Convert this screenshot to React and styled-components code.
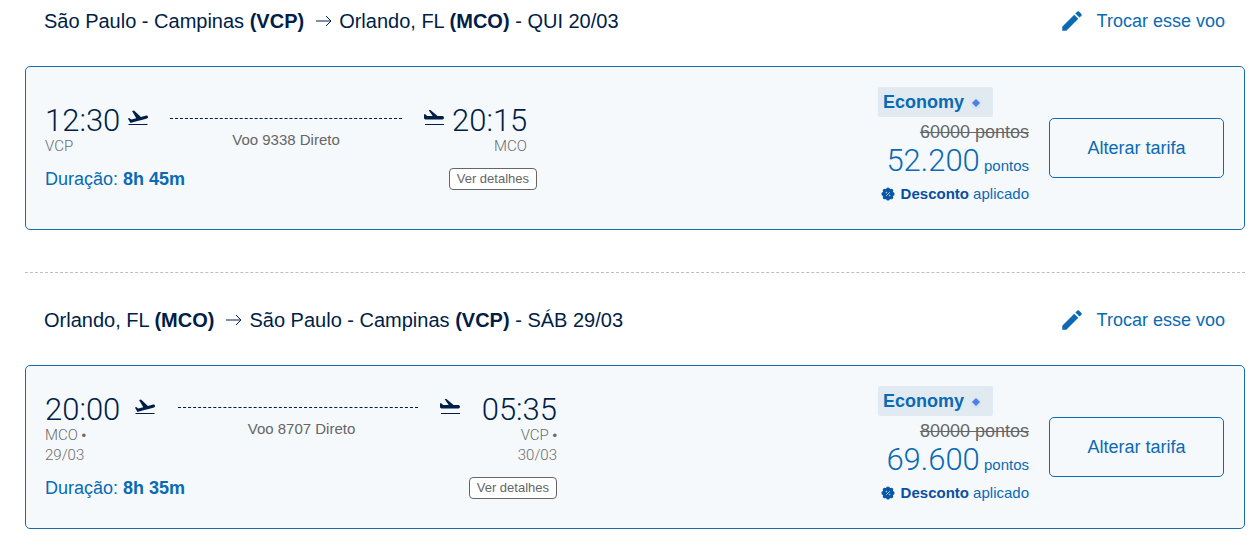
import { Fragment } from 'react'
import { MdEdit } from 'react-icons/md'
import styled, { createGlobalStyle } from 'styled-components'

const flights = [
    {
        from: 'São Paulo - Campinas',
        fromCode: 'VCP',
        to: 'Orlando, FL',
        toCode: 'MCO',
        day: 'QUI 20/03',
        departure: '12:30',
        arrival: '20:15',
        number: 'Voo 9338 Direto',
        duration: '8h 45m',
        oldPrice: '60000 pontos',
        price: '52.200'
    },
    {
        from: 'Orlando, FL',
        fromCode: 'MCO',
        to: 'São Paulo - Campinas',
        toCode: 'VCP',
        day: 'SÁB 29/03',
        departure: '20:00',
        departureDate: '29/03',
        arrival: '05:35',
        arrivalDate: '30/03',
        number: 'Voo 8707 Direto',
        duration: '8h 35m',
        oldPrice: '80000 pontos',
        price: '69.600'
    }
]

export default function App (){
    return(
        <Page>
            <GlobalStyle />
            {flights.map((flight, index) => (
                <Fragment key={flight.number}>
                    {index > 0 && <Divider />}
                    <Flight flight={flight} />
                </Fragment>
            ))}
        </Page>
    )
}

function Flight ({ flight }){
    const overnight = Boolean(flight.arrivalDate)
    return(
        <section>
            <Header>
                <Title>
                    {flight.from} <b>({flight.fromCode})</b>
                    <Arrow />
                    {flight.to} <b>({flight.toCode})</b> - {flight.day}
                </Title>
                <ChangeLink href='#'>
                    <MdEdit size={26} />
                    Trocar esse voo
                </ChangeLink>
            </Header>
            <Card>
                <Itinerary>
                    <Route $overnight={overnight}>
                        <Stop time={flight.departure} code={flight.fromCode} date={flight.departureDate} />
                        <Takeoff />
                        <Track $overnight={overnight}>
                            <Line $overnight={overnight} />
                            <p>{flight.number}</p>
                        </Track>
                        <Landing />
                        <Stop time={flight.arrival} code={flight.toCode} date={flight.arrivalDate} arrival />
                    </Route>
                    <Details>
                        <p>Duração: <b>{flight.duration}</b></p>
                        <DetailsButton type='button'>Ver detalhes</DetailsButton>
                    </Details>
                </Itinerary>
                <Fare>
                    <Cabin>Economy <Diamond /></Cabin>
                    <OldPrice>{flight.oldPrice}</OldPrice>
                    <Price><strong>{flight.price}</strong> pontos</Price>
                    <Discount>
                        <DiscountSeal />
                        <span><b>Desconto</b> aplicado</span>
                    </Discount>
                </Fare>
                <FareButton type='button'>Alterar tarifa</FareButton>
            </Card>
        </section>
    )
}

function Stop ({ time, code, date, arrival }){
    return(
        <StopBox $arrival={arrival} $wide={arrival && date}>
            <Time>{time}</Time>
            <p>{code}{date && <> <Bullet>•</Bullet></>}</p>
            {date && <p>{date}</p>}
        </StopBox>
    )
}

function Arrow (){
    return(
        <ArrowIcon viewBox='0 0 16 12'>
            <path d='M0 6H15M10 1L15 6L10 11' fill='none' stroke='currentColor' />
        </ArrowIcon>
    )
}

function Takeoff (){
    return(
        <PlaneIcon viewBox='2 3 20 17'>
            <path d='M22.07 9.64c-.21-.8-1.04-1.28-1.84-1.06L14.92 10l-6.9-6.43-1.93.51 4.14 7.17-4.97 1.33-1.97-1.54-1.45.39 1.82 3.16.77 1.33 1.6-.43 5.31-1.42 4.35-1.16L21 11.49c.81-.23 1.28-1.05 1.07-1.85z' />
            <path d='M2.5 17h19v1h-19z' />
        </PlaneIcon>
    )
}

function Landing (){
    return(
        <PlaneIcon viewBox='0 0 20 17'>
            <path d='M0 4.2H1.2L3.2 6H8.7L4.6 0H6.4L13.6 6H18.4A1.5 1.6 0 0 1 18.4 9.4H1.5Q0 9.4 0 8Z' />
            <path d='M1 14h19v1H1z' />
        </PlaneIcon>
    )
}

function Diamond (){
    return(
        <DiamondIcon viewBox='0 0 16 16'>
            <circle cx='8' cy='10' r='5' fill='#d3dff5' opacity='.7' />
            <path d='M8 5l4 4-4 4-4-4z' fill='#4b80e6' />
        </DiamondIcon>
    )
}

function DiscountSeal (){
    const angles = [0, 45, 90, 135, 180, 225, 270, 315]
    return(
        <SealIcon viewBox='0 0 14 14'>
            <circle cx='7' cy='7' r='5.4' />
            {angles.map((angle) => (
                <circle key={angle} cx='7' cy='2.3' r='1.9' transform={`rotate(${angle} 7 7)`} />
            ))}
            <g fill='none' stroke='#d9ecff' strokeWidth='.8'>
                <path d='M5.2 8.8L8.8 5.2' />
                <circle cx='5.3' cy='5.5' r='.4' />
                <circle cx='8.7' cy='8.5' r='.4' />
            </g>
        </SealIcon>
    )
}

const GlobalStyle = createGlobalStyle`
    *{
        box-sizing: border-box;
    }

    body{
        margin: 0;
        background: #ffffff;
        color: #001e46;
        font-family: 'Liberation Sans', Arial, sans-serif;
    }

    p, h2{
        margin: 0;
    }

    button{
        font-family: inherit;
        cursor: pointer;
    }
`;

const Page = styled.main`
    padding: 0px 11px 0px 25px;
`;

const Divider = styled.hr`
    margin: 42px 0px 26px;
    border: 0;
    border-top: 1px dashed #bfbfbf;
`;

const Header = styled.header`
    display: flex;
    justify-content: space-between;
    align-items: center;
    height: 42px;
    margin-bottom: 24px;
    padding: 0px 20px 0px 19px;
`;

const Title = styled.h2`
    font-weight: 400;
    font-size: 20px;
    line-height: 24px;
`;

const ArrowIcon = styled.svg`
    width: 16px;
    height: 12px;
    margin: 0px 7px 0px 12px;
    vertical-align: 1px;
`;

const ChangeLink = styled.a`
    display: flex;
    align-items: center;
    gap: 12px;
    color: #0a6ab3;
    font-size: 18px;
    text-decoration: none;
`;

const Card = styled.div`
    display: flex;
    align-items: center;
    gap: 20px;
    padding: 20px 20px 20px 19px;
    background: #f5f9fc;
    border: 1px solid #1a6ca8;
    border-radius: 5px;
`;

const Itinerary = styled.div`
    margin-right: auto;
`;

const Route = styled.div`
    display: flex;
    gap: ${({ $overnight }) => $overnight ? '15px' : '8px'};
    padding-right: ${({ $overnight }) => $overnight ? '0px' : '10px'};
`;

const StopBox = styled.div`
    width: ${({ $wide }) => $wide ? '82px' : '75px'};
    color: #6b6b6b;
    font-family: Roboto, sans-serif;
    font-weight: 300;
    font-size: 15px;
    line-height: 20px;
    text-align: ${({ $arrival }) => $arrival ? 'right' : 'left'};
`;

const Time = styled.p`
    color: #001e46;
    font-size: 31px;
    line-height: 30px;
`;

const Bullet = styled.span`
    font-family: 'DejaVu Sans', sans-serif;
    font-size: 13px;
    line-height: 16px;
`;

const PlaneIcon = styled.svg`
    flex: none;
    width: 20px;
    height: 17px;
    margin-top: 4px;
    fill: currentColor;
`;

const Track = styled.div`
    width: ${({ $overnight }) => $overnight ? '247px' : '232px'};
    margin: ${({ $overnight }) => $overnight ? '12px 0px 0px 8px' : '12px 14px 0px'};
    color: #666666;
    font-size: 15px;
    line-height: 20px;
    text-align: center;
`;

const Line = styled.div`
    margin: ${({ $overnight }) => $overnight ? '0px 7px 11px 0px' : '0px 0px 11px'};
    border-top: 1px dashed #001e46;
`;

const Details = styled.div`
    display: flex;
    justify-content: space-between;
    align-items: center;
    margin-top: 12px;
    color: #0a6ab3;
    font-size: 18px;
    line-height: 22px;
`;

const DetailsButton = styled.button`
    height: 22px;
    padding: 0px 7px;
    background: #ffffff;
    border: 1px solid #666666;
    border-radius: 4px;
    color: #666666;
    font-size: 13px;
    line-height: 20px;
`;

const Fare = styled.div`
    display: flex;
    flex-direction: column;
    align-items: flex-end;
    width: 151px;
    height: 122px;
    color: #0a6ab3;
    font-size: 15px;
    line-height: 20px;
`;

const Cabin = styled.div`
    display: flex;
    align-items: center;
    align-self: flex-start;
    gap: 4px;
    width: 115px;
    height: 30px;
    margin-bottom: 5px;
    padding-left: 5px;
    background: #e2eaf1;
    border-radius: 2px;
    font-weight: 700;
    font-size: 18px;
`;

const DiamondIcon = styled.svg`
    width: 16px;
    height: 16px;
`;

const OldPrice = styled.s`
    color: #666666;
    font-size: 18px;
`;

const Price = styled.p`
    height: 38px;
    line-height: 38px;

    strong{
        font-family: Roboto, sans-serif;
        font-weight: 300;
        font-size: 31px;
    }
`;

const Discount = styled.p`
    display: flex;
    align-items: center;
    gap: 6px;
    margin-top: 4px;

    b{
        color: #0a4fa0;
    }
`;

const SealIcon = styled.svg`
    width: 14px;
    height: 14px;
    fill: #0a57a6;
`;

const FareButton = styled.button`
    width: 175px;
    height: 60px;
    background: transparent;
    border: 1px solid #0a6ab3;
    border-radius: 5px;
    color: #0a6ab3;
    font-size: 18px;
`;
